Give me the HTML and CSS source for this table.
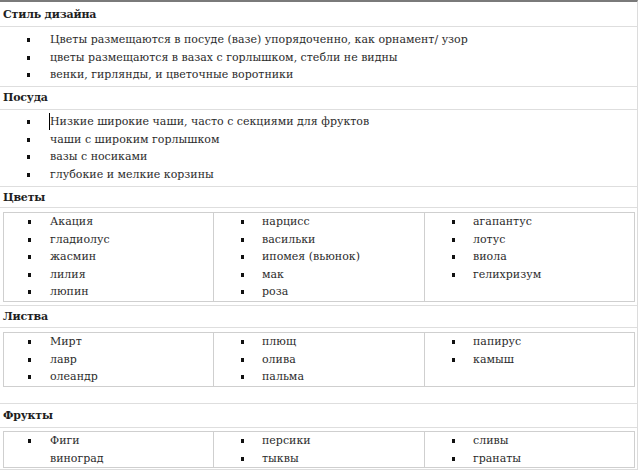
FILE: index.html
```html
<!DOCTYPE html>
<html lang="ru">
<head>
<meta charset="utf-8">
<title>Стиль дизайна</title>
<link rel="stylesheet" href="styles.css">
</head>
<body>
<div class="doc">
  <div class="head h1">Стиль дизайна</div>
  <div class="body b1">
    <ul class="list">
      <li>Цветы размещаются в посуде (вазе) упорядоченно, как орнамент/ узор</li>
      <li>цветы размещаются в вазах с горлышком, стебли не видны</li>
      <li>венки, гирлянды, и цветочные воротники</li>
    </ul>
  </div>
  <div class="head h2">Посуда</div>
  <div class="body b2">
    <ul class="list">
      <li><span class="caret"></span>Низкие широкие чаши, часто с секциями для фруктов</li>
      <li>чаши с широким горлышком</li>
      <li>вазы с носиками</li>
      <li>глубокие и мелкие корзины</li>
    </ul>
  </div>
  <div class="head h3">Цветы</div>
  <div class="body boxed b3">
    <div class="grid">
      <ul class="list cell">
        <li>Акация</li>
        <li>гладиолус</li>
        <li>жасмин</li>
        <li>лилия</li>
        <li>люпин</li>
      </ul>
      <ul class="list cell">
        <li>нарцисс</li>
        <li>васильки</li>
        <li>ипомея (вьюнок)</li>
        <li>мак</li>
        <li>роза</li>
      </ul>
      <ul class="list cell">
        <li>агапантус</li>
        <li>лотус</li>
        <li>виола</li>
        <li>гелихризум</li>
      </ul>
    </div>
  </div>
  <div class="head h4">Листва</div>
  <div class="body boxed b4">
    <div class="grid">
      <ul class="list cell">
        <li>Мирт</li>
        <li>лавр</li>
        <li>олеандр</li>
      </ul>
      <ul class="list cell">
        <li>плющ</li>
        <li>олива</li>
        <li>пальма</li>
      </ul>
      <ul class="list cell">
        <li>папирус</li>
        <li>камыш</li>
      </ul>
    </div>
  </div>
  <div class="head h5">Фрукты</div>
  <div class="body boxed b5">
    <div class="grid">
      <ul class="list cell">
        <li>Фиги<br>виноград</li>
      </ul>
      <ul class="list cell">
        <li>персики</li>
        <li>тыквы</li>
      </ul>
      <ul class="list cell">
        <li>сливы</li>
        <li>гранаты</li>
      </ul>
    </div>
  </div>
</div>
</body>
</html>
```

FILE: styles.css
```css
html, body {
  margin: 0;
  padding: 0;
  background: #fff;
}

body {
  font-family: "DejaVu Serif", "Liberation Serif", serif;
  font-size: 11px;
  color: #2b2b2b;
  width: 640px;
  height: 471px;
  overflow: hidden;
}

.doc {
  width: 637px;
  border-top: 2px solid #7a7a7a;
  border-right: 1px solid #dcdcdc;
}

.head {
  padding-left: 3px;
  font-weight: bold;
  font-size: 11px;
  letter-spacing: -0.2px;
  color: #1e1e1e;
  border-bottom: 1px solid #dedede;
}

.h1 { height: 24px; line-height: 26px; }
.h2 { height: 22px; line-height: 22px; }
.h3 { height: 20px; line-height: 21px; }
.h4 { height: 21px; line-height: 21px; }
.h5 { height: 23px; line-height: 24px; }

.body {
  border-bottom: 1px solid #dedede;
}

.b1 { padding: 4px 0 2.5px; }
.b2 { padding: 3px 0 3px; }

.boxed {
  padding-left: 3px;
  padding-right: 2px;
}

.b3 { padding-top: 4px; padding-bottom: 3.5px; }
.b4 { padding-top: 4px; padding-bottom: 16.5px; }
.b5 { padding-top: 3px; padding-bottom: 1px; }

.list {
  list-style: none;
  margin: 0;
  padding: 0;
  line-height: 17.5px;
}

.list li {
  position: relative;
  padding-left: 50px;
}

.list li::before {
  content: "";
  position: absolute;
  left: 27px;
  top: 7px;
  width: 3px;
  height: 4px;
  background: #111;
}

.grid {
  display: grid;
  grid-template-columns: 209px 211px 211px;
  border: 1px solid #cfcfcf;
}

.cell {
  padding: 0;
}

.cell + .cell {
  border-left: 1px solid #cfcfcf;
}

.grid .cell li {
  padding-left: 46px;
}

.grid .cell li::before {
  left: 24px;
}

.grid .cell + .cell li {
  padding-left: 48px;
}

.grid .cell + .cell li::before {
  left: 27px;
}

.caret {
  display: inline-block;
  width: 0;
  height: 17px;
  border-left: 1px solid #000;
  vertical-align: top;
  margin-left: -1px;
}
```
